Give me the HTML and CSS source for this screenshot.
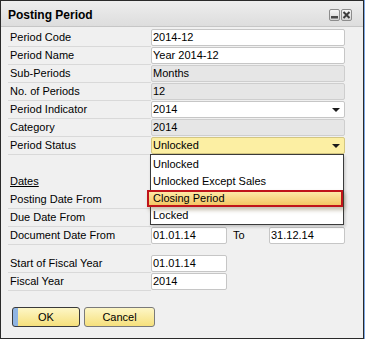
FILE: index.html
```html
<!DOCTYPE html>
<html lang="en">
<head>
    <meta charset="UTF-8">
    <title>Posting Period</title>
    <link rel="stylesheet" href="styles.css">
</head>
<body>
    <div class="window">
        <div class="titlebar">
            <span class="title">Posting Period</span>
            <div class="tb-buttons">
                <span class="tb-btn">
                    <svg width="11" height="12" viewBox="0 0 11 12"><rect x="2" y="7" width="7" height="2.5" fill="#4a4a4a"/></svg>
                </span>
                <span class="tb-btn">
                    <svg width="11" height="12" viewBox="0 0 11 12"><path d="M2.5 3 L8.5 9 M8.5 3 L2.5 9" stroke="#3c3c3c" stroke-width="2"/></svg>
                </span>
            </div>
        </div>

        <div class="content">
            <div class="row"><div class="label">Period Code</div><div class="field">2014-12</div></div>
            <div class="row"><div class="label">Period Name</div><div class="field">Year 2014-12</div></div>
            <div class="row"><div class="label">Sub-Periods</div><div class="field readonly">Months</div></div>
            <div class="row"><div class="label">No. of Periods</div><div class="field readonly">12</div></div>
            <div class="row"><div class="label">Period Indicator</div><div class="field combo">2014<span class="arrow"></span></div></div>
            <div class="row"><div class="label">Category</div><div class="field readonly">2014</div></div>
            <div class="row"><div class="label">Period Status</div><div class="field combo active">Unlocked<span class="arrow"></span></div></div>

            <div class="row"><div class="label plain"></div></div>
            <div class="row"><div class="label plain"><u>Dates</u></div></div>
            <div class="row"><div class="label">Posting Date From</div></div>
            <div class="row"><div class="label">Due Date From</div></div>
            <div class="row">
                <div class="label">Document Date From</div>
                <div class="field short">01.01.14</div>
                <div class="to">To</div>
                <div class="field short">31.12.14</div>
            </div>

            <div class="row gap"><div class="label">Start of Fiscal Year</div><div class="field short">01.01.14</div></div>
            <div class="row"><div class="label">Fiscal Year</div><div class="field short">2014</div></div>

            <div class="actions">
                <button class="btn default">OK</button>
                <button class="btn">Cancel</button>
            </div>
        </div>

        <!-- opened list of Period Status -->
        <div class="dropdown">
            <div class="option">Unlocked</div>
            <div class="option">Unlocked Except Sales</div>
            <div class="option selected">Closing Period</div>
            <div class="option">Locked</div>
        </div>
    </div>
</body>
</html>
```

FILE: styles.css
```css
* {
    box-sizing: border-box;
}

body {
    margin: 0;
    background: #ffffff;
    font-family: "Liberation Sans", Arial, sans-serif;
    font-size: 11px;
    color: #000;
}

.window {
    position: relative;
    width: 364px;
    height: 339px;
    border: 1px solid #2a2a2a;
    background: #f0f0f0;
    box-shadow: 1px 0 0 #7ba7e4;
}

.titlebar {
    display: flex;
    align-items: center;
    justify-content: space-between;
    height: 26px;
    padding: 0 11px 0 7px;
    background: linear-gradient(#eeeeee, #dddddd);
    border-bottom: 1px solid #c6c6c6;
}

.title {
    font-size: 12px;
    font-weight: bold;
    padding-top: 2px;
}

.tb-buttons {
    display: flex;
    gap: 1px;
    padding-top: 2px;
}

.tb-btn {
    display: flex;
    width: 11px;
    height: 12px;
    border: 1px solid #8c8c8c;
    border-radius: 2px;
    background: linear-gradient(#f6f6f6, #d4d4d4);
}

.tb-btn svg {
    margin: -1px;
}

.content {
    padding: 2px 0 0 7px;
}

.row {
    display: flex;
    height: 18px;
}

.row.gap {
    margin-top: 10px;
}

.label {
    width: 143px;
    height: 18px;
    padding-left: 2px;
    line-height: 17px;
    border-bottom: 1px solid #d9d9d9;
}

.label.plain {
    border-bottom: none;
}

.field {
    position: relative;
    width: 194px;
    height: 17px;
    padding-left: 1px;
    line-height: 15px;
    border: 1px solid #c6c6c6;
    border-radius: 2px;
    background: #ffffff;
}

.field.readonly {
    background: #e6e6e6;
    border-color: #cecece;
}

.field.active {
    background: #fcefa3;
    border-color: #d3c682;
}

.field.short {
    width: 76px;
}

.to {
    width: 42px;
    padding-left: 6px;
    line-height: 17px;
}

.arrow {
    position: absolute;
    right: 4px;
    top: 6px;
    border-left: 4px solid transparent;
    border-right: 4px solid transparent;
    border-top: 4px solid #1a1a1a;
}

.actions {
    display: flex;
    gap: 4px;
    margin: 16px 0 0 4px;
}

.btn {
    height: 20px;
    width: 71px;
    padding: 0;
    font-family: inherit;
    font-size: 11px;
    color: #000;
    border: 1px solid #7a7a7a;
    border-radius: 3px;
    background: linear-gradient(#fdf6c6, #f6e07c);
}

.btn.default {
    width: 68px;
    border-color: #3a3a3a;
    background: linear-gradient(90deg, #8fb4e2 0, #8fb4e2 5px, transparent 5px),
                linear-gradient(#fdf6c6, #f6e07c);
}

.dropdown {
    position: absolute;
    left: 149px;
    top: 153px;
    width: 194px;
    height: 71px;
    padding-top: 1px;
    border: 1px solid #3a3a3a;
    background: #ffffff;
    box-shadow: 1px 2px 3px rgba(0, 0, 0, 0.2);
}

.option {
    height: 17px;
    padding-left: 2px;
    line-height: 17px;
}

.option.selected {
    position: relative;
    margin-left: -4px;
    padding-left: 4px;
    line-height: 13px;
    border: 2px solid #c0141a;
    background: linear-gradient(#fde9a6, #f4c664);
    box-shadow: 2px 3px 4px rgba(90, 70, 20, 0.35);
}
```
